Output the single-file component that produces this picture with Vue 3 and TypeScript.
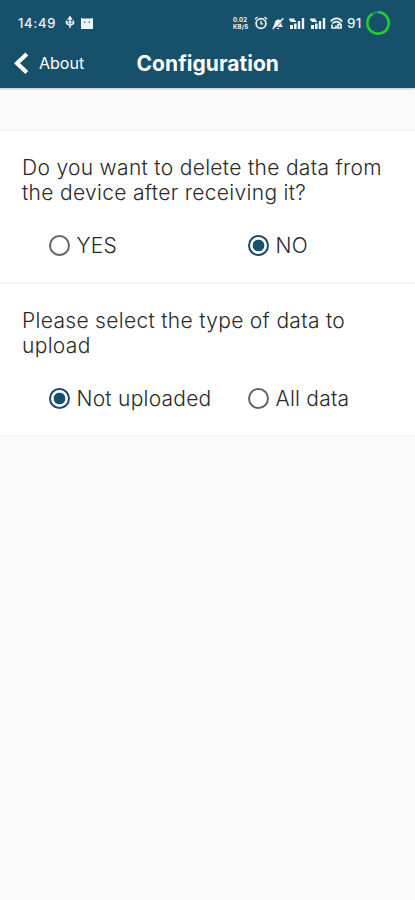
<script setup lang="ts">
import { reactive } from 'vue'

interface Option {
  value: string
  label: string
}
interface Question {
  id: string
  lines: string[]
  options: Option[]
}

const questions: Question[] = [
  {
    id: 'delete',
    lines: ['Do you want to delete the data from', 'the device after receiving it?'],
    options: [
      { value: 'yes', label: 'YES' },
      { value: 'no', label: 'NO' },
    ],
  },
  {
    id: 'upload',
    lines: ['Please select the type of data to', 'upload'],
    options: [
      { value: 'new', label: 'Not uploaded' },
      { value: 'all', label: 'All data' },
    ],
  },
]

const selected = reactive<Record<string, string>>({ delete: 'no', upload: 'new' })
</script>

<template>
  <div class="screen">
    <header class="header">
      <div class="status">
        <span class="time">14:49</span>
        <svg class="usb" width="10" height="14" viewBox="0 0 10 14" fill="none" stroke="currentColor" stroke-width="1.400">
          <path d="M5 2v10M1.500 4.500v3L5 9.500l3.500-2v-3" />
          <path d="M3.500 3 5 .8 6.500 3z" fill="currentColor" />
          <path d="M1 5h8v2.500H1z" fill="currentColor" stroke="none" opacity="0.55" />
        </svg>
        <svg class="droid" width="12" height="11" viewBox="0 0 12 11">
          <path d="M0 0 2 .6h8l2-.6v11H0z" fill="currentColor" />
          <path d="M3.800 3.500v1.500M8.200 3.500v1.500" stroke="#17506b" stroke-width="1" />
        </svg>
        <div class="right">
          <span class="rate"><span>0.02</span><span>KB/S</span></span>
          <svg class="alarm" width="14" height="14" viewBox="0 0 14 14" fill="none" stroke="currentColor" stroke-width="1.700">
            <circle cx="7" cy="7.500" r="4.900" />
            <path d="M7 4.800v3h2.200M.8 3.300 3.600 1M13.200 3.300 10.400 1" stroke-width="1.300" />
          </svg>
          <svg class="mute" width="12" height="13" viewBox="0 0 12 13">
            <path d="M1 10C3 8 2 3 6 2.500 7.500 2.200 9 3 9.500 4.500V8l1.500 2zM4.500 11h3L6 12.500z" fill="currentColor" />
            <path d="M1.800 12.800 12 2.600" stroke="#17506b" stroke-width="1" />
            <path d="M.7 12 11.300 1.200" stroke="currentColor" stroke-width="1.500" />
          </svg>
          <svg v-for="n in 2" :key="n" class="signal" width="16" height="12" viewBox="0 0 16 12" fill="currentColor">
            <path d="M0 1.500h5.500v2H7V5H1.500V3.500H0zM1 8h3v4H1zM5 6.500h2.600V12H5zM8.800 4h2.400v8H8.800zM12.800 1h2.400v11h-2.400z" />
          </svg>
          <svg class="wifi" width="13" height="12" viewBox="0 0 13 12" fill="none" stroke="currentColor" stroke-width="1.700">
            <path d="M.8 4.500C3.500.2 9.500.2 12.200 4.500M2.500 6.500c2-2.500 6-2.500 8 0M2 7.500v3.500h4V8.500M8 11V7.500h3V11z" />
          </svg>
          <span class="battery">91</span>
          <svg class="ring" width="26" height="26" viewBox="0 0 26 26" fill="none">
            <circle cx="13" cy="13" r="10.700" stroke="#247c56" stroke-width="2.400" />
            <path d="M13 2.300A10.700 10.700 0 1 1 7.600 3.800" stroke="#20cf2c" stroke-width="2.500" />
          </svg>
        </div>
      </div>
      <nav class="nav">
        <button class="back" type="button">
          <svg width="15" height="23" viewBox="0 0 15 23" fill="none" stroke="currentColor" stroke-width="4.200">
            <path d="M12.800 2 3 11.200l9.800 9.300" />
          </svg>
          <span>About</span>
        </button>
        <h1>Configuration</h1>
      </nav>
    </header>

    <main class="content">
      <section v-for="q in questions" :key="q.id" class="question" role="radiogroup">
        <p class="prompt">
          <span v-for="line in q.lines" :key="line">{{ line }}</span>
        </p>
        <div class="options">
          <label v-for="o in q.options" :key="o.value" class="option">
            <input v-model="selected[q.id]" type="radio" :name="q.id" :value="o.value" />
            <span>{{ o.label }}</span>
          </label>
        </div>
      </section>
    </main>
  </div>
</template>

<style>
body {
  background: #fafafa;
}
</style>

<style scoped>
.screen {
  min-height: 900px;
  background: #fafafa;
  font-family: Inter, Roboto, sans-serif;
  overflow: hidden;
}
.header {
  box-sizing: border-box;
  height: 88px;
  background: #17506b;
  color: #fff;
  box-shadow: 0 1px 2px rgba(0, 0, 0, 0.22);
}
.status {
  display: flex;
  align-items: center;
  height: 46px;
  padding: 0 24px 0 18px;
  color: #edf4f6;
}
.time {
  width: 47px;
  font-size: 13px;
  font-weight: 500;
  letter-spacing: 0.7px;
}
.droid {
  margin-left: 6px;
}
.right {
  display: flex;
  align-items: center;
  margin-left: auto;
}
.rate {
  display: flex;
  flex-direction: column;
  width: 16px;
  font-size: 6px;
  line-height: 7px;
  font-weight: 700;
  letter-spacing: 0.2px;
  white-space: nowrap;
}
.alarm {
  margin-left: 5px;
}
.mute {
  margin-left: 4px;
}
.signal {
  margin-left: 5px;
}
.wifi {
  margin-left: 4px;
}
.battery {
  width: 17px;
  margin-left: 4px;
  font-size: 13.5px;
  font-weight: 500;
  letter-spacing: 0.2px;
}
.ring {
  margin-left: 1px;
}
.nav {
  display: grid;
  grid-template-columns: 136.500px 1fr;
  align-items: center;
  height: 34px;
}
.back {
  display: flex;
  align-items: center;
  gap: 10.500px;
  padding: 0 0 0 13.500px;
  border: 0;
  background: none;
  color: inherit;
  font: 400 16px/20px Inter, Roboto, sans-serif;
}
h1 {
  margin: 1px 0 0;
  font-size: 21px;
  line-height: 26px;
  font-weight: 700;
  letter-spacing: 0.05px;
}
.content {
  margin-top: 42px;
  background: #fff;
  border-top: 1px solid #f0f0f0;
  border-bottom: 1px solid #f3f3f3;
}
.question {
  box-sizing: border-box;
  height: 151px;
  padding: 24px 22px 0;
}
.question + .question {
  height: 153px;
  padding-top: 24px;
  border-top: 2px solid #f3f3f3;
}
.prompt {
  display: flex;
  flex-direction: column;
  margin: 0;
  color: #2a2a2a;
  font-size: 21px;
  font-weight: 300;
  line-height: 25px;
  letter-spacing: 0.31px;
  white-space: nowrap;
}
.options {
  display: grid;
  grid-template-columns: 199px 1fr;
  margin-top: 26px;
  padding-left: 27px;
}
.option {
  display: flex;
  align-items: center;
  gap: 6.500px;
  color: #2a2a2a;
  font-size: 21px;
  font-weight: 300;
  line-height: 28px;
  letter-spacing: 0.24px;
  white-space: nowrap;
}
.option span {
  padding-top: 1px;
  margin-bottom: -1px;
}
.option input {
  flex: none;
  appearance: none;
  width: 21px;
  height: 21px;
  margin: 0;
  border: 2px solid #666;
  border-radius: 50%;
}
.option input:checked {
  border: 2px solid #1c4766;
  background: radial-gradient(circle, #17506b 5.500px, transparent 6.200px);
}
</style>
